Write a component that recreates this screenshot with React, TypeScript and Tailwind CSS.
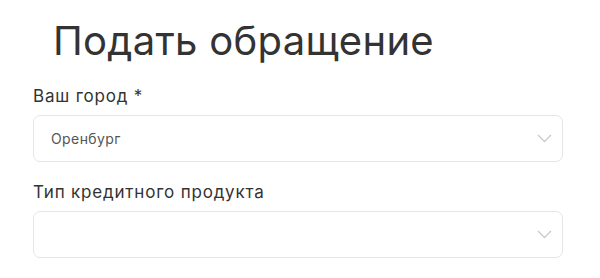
const font = { fontFamily: "Inter, 'Noto Sans', sans-serif" }

function Chevron() {
  return (
    <svg width="15" height="9" viewBox="0 0 15 9" fill="none" className="text-[#c9c9c9]">
      <path d="M1 1l6.5 6.5L14 1" stroke="currentColor" strokeWidth="1.3" />
    </svg>
  )
}

function SelectBox({ value }: { value?: string }) {
  return (
    <div className="flex h-[47px] w-[530px] items-center justify-between rounded-[7px] border border-[#e6e6e6] bg-white pl-[17px] pr-[10px]">
      <span className="text-[14px] tracking-[0.4px] text-[#555]">{value}</span>
      <Chevron />
    </div>
  )
}

export default function App() {
  return (
    <div className="h-[278px] w-[600px] overflow-hidden bg-white px-[33px] text-[#333]" style={font}>
      <h1 className="pl-[20px] pt-[16px] text-[40px] leading-[50px] font-normal tracking-[0.3px]">Подать обращение</h1>

      <div className="mt-[20px] text-[17px] leading-[20px] tracking-[0.8px]">Ваш город *</div>
      <div className="mt-[9px]">
        <SelectBox value="Оренбург" />
      </div>

      <div className="mt-[20px] text-[17px] leading-[20px] tracking-[0.8px]">Тип кредитного продукта</div>
      <div className="mt-[9px]">
        <SelectBox />
      </div>
    </div>
  )
}
